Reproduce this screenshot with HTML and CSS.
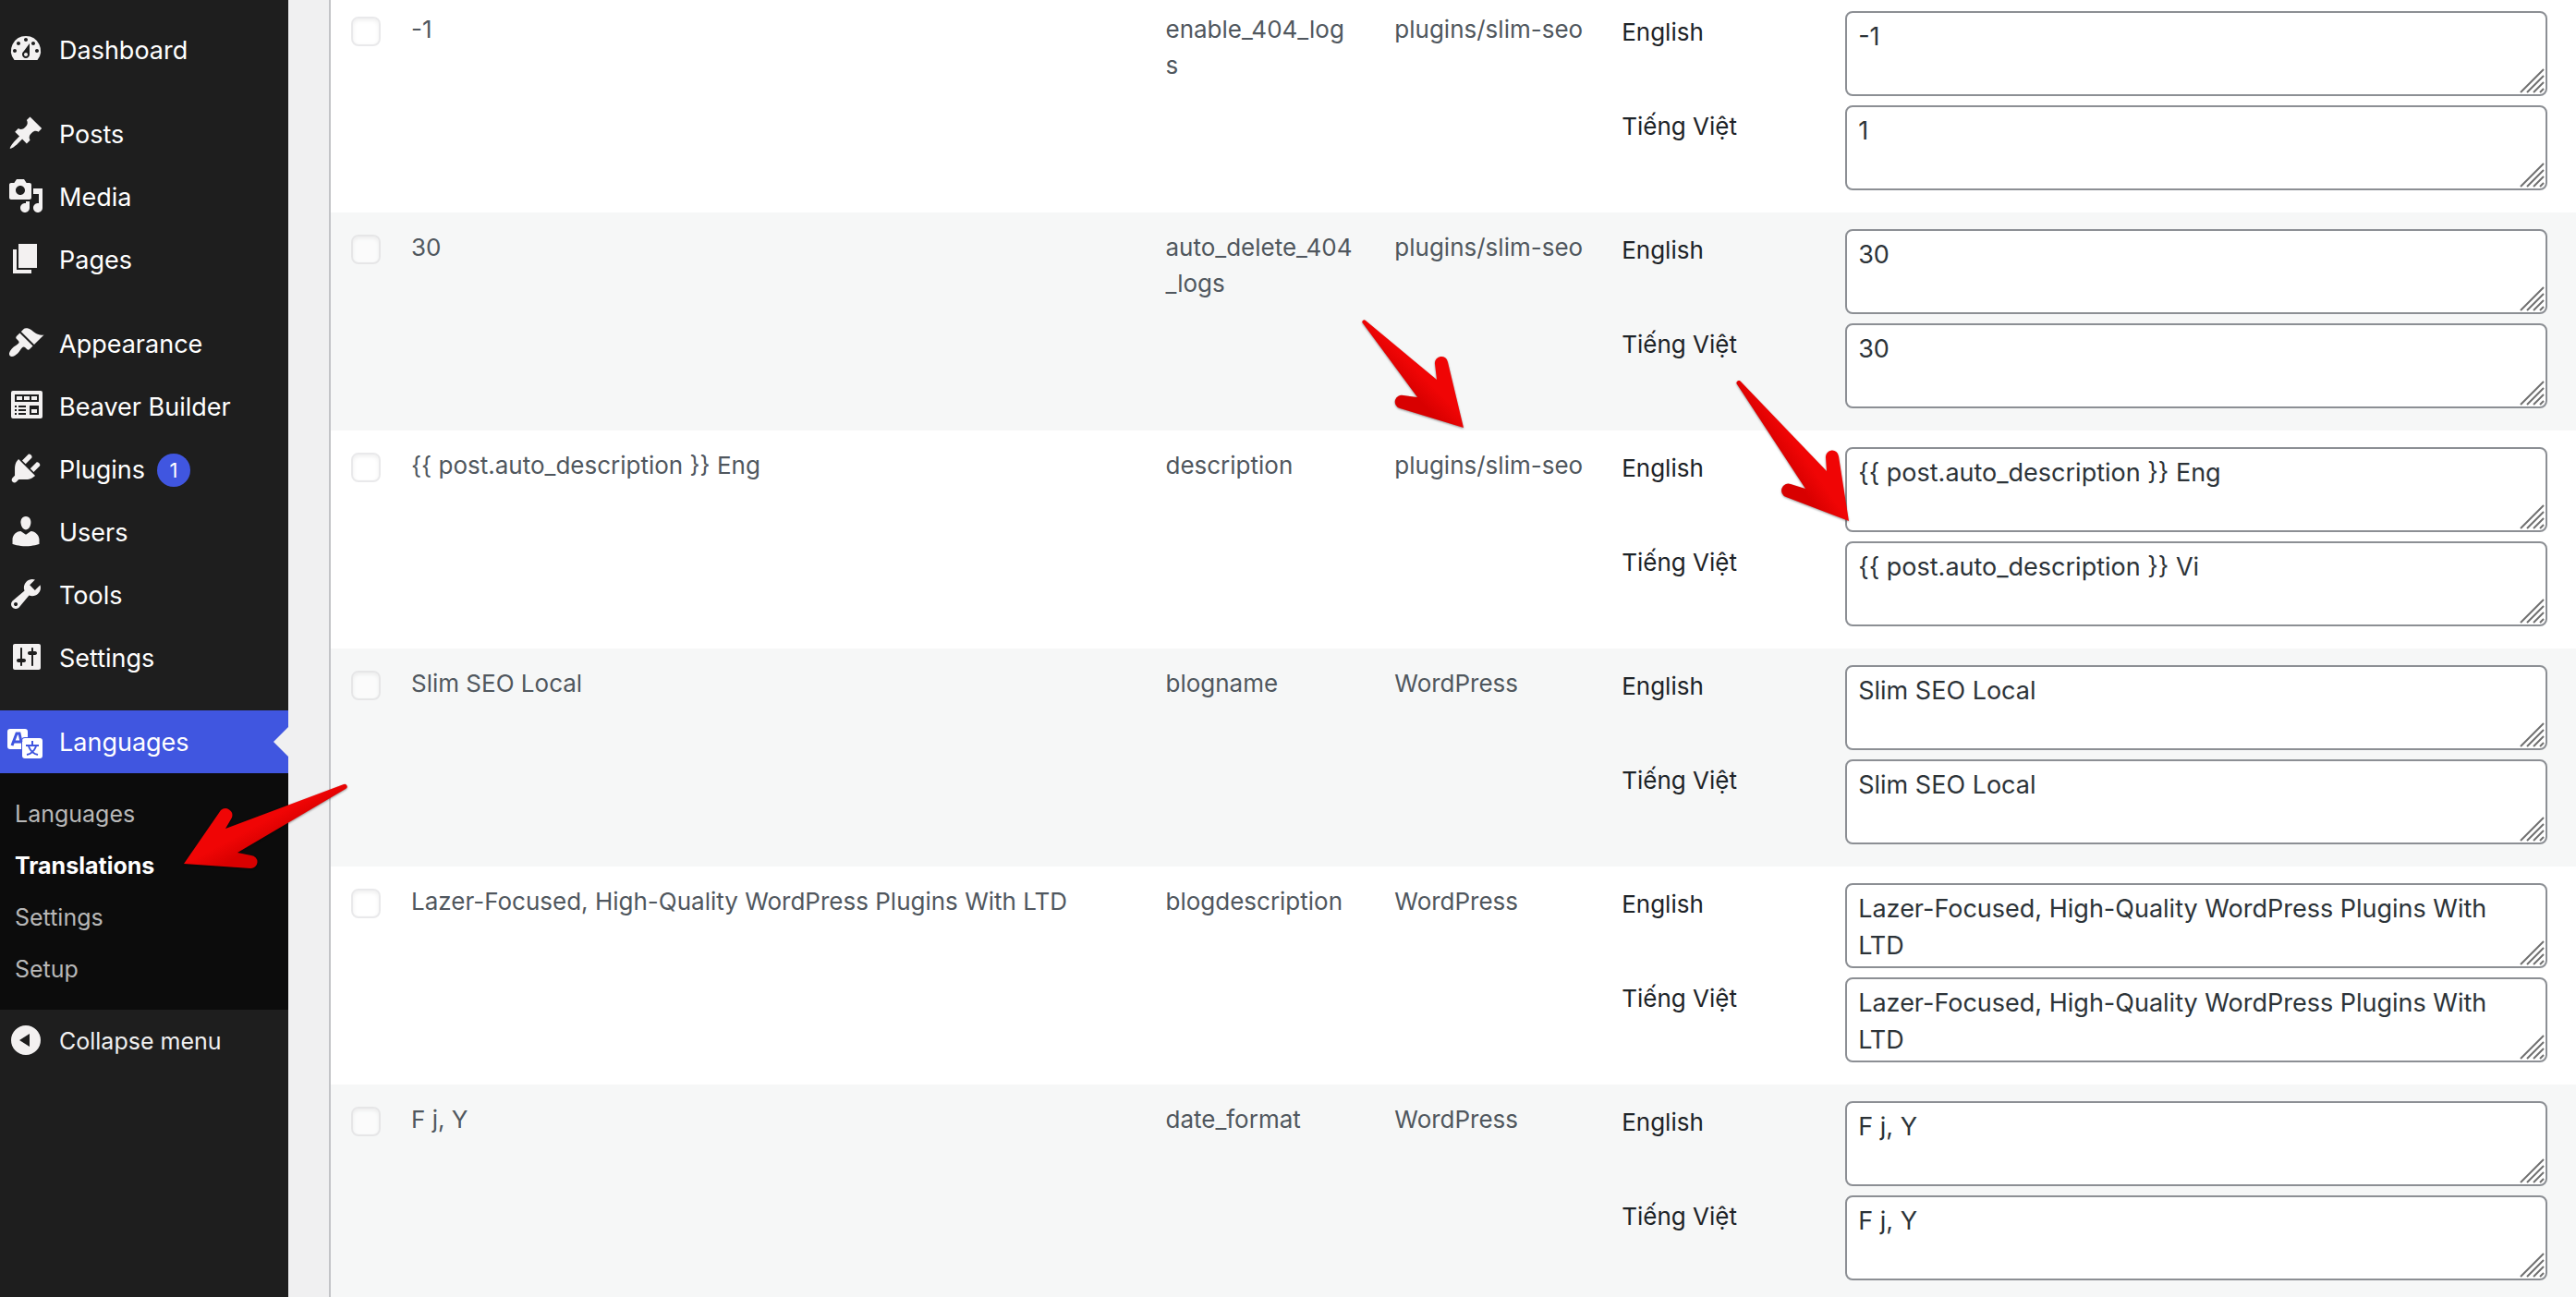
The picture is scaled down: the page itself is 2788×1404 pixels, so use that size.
FILE: index.html
```html
<!DOCTYPE html>
<html lang="en">
<head>
    <meta charset="UTF-8">
    <meta name="viewport" content="width=device-width, initial-scale=1.0">
    <title>Translations</title>
    <link rel="stylesheet" href="styles.css">
</head>
<body>
    <nav class="sidebar">
        <ul class="menu">
            <li>
                <a href="#">
                    <svg class="icon" viewBox="0 0 20 20"><path d="M3.76 16h12.48A7.998 7.998 0 0010 3a7.998 7.998 0 00-6.24 13zM10 4c.55 0 1 .45 1 1s-.45 1-1 1-1-.45-1-1 .45-1 1-1zM6 6c.55 0 1 .45 1 1s-.45 1-1 1-1-.45-1-1 .45-1 1-1zm8 0c.55 0 1 .45 1 1s-.45 1-1 1-1-.45-1-1 .45-1 1-1zm-5.37 5.55L12 7v6c0 1.1-.9 2-2 2s-2-.9-2-2c0-.57.24-1.08.63-1.45zM4 10c.55 0 1 .45 1 1s-.45 1-1 1-1-.45-1-1 .45-1 1-1zm12 0c.55 0 1 .45 1 1s-.45 1-1 1-1-.45-1-1 .45-1 1-1zm-6 2c-.55 0-1 .45-1 1s.45 1 1 1 1-.45 1-1-.45-1-1-1z"/></svg>
                    Dashboard
                </a>
            </li>
            <li class="group-start">
                <a href="#">
                    <svg class="icon" viewBox="0 0 20 20"><path d="M10.44 3.02l1.82-1.82 6.36 6.35-1.83 1.82c-1.05-.68-2.48-.57-3.41.36l-.75.75c-.92.93-1.04 2.35-.35 3.41l-1.83 1.82-2.41-2.41-2.8 2.79c-.42.42-3.38 2.71-3.8 2.29s1.86-3.39 2.28-3.81l2.79-2.79L4.1 9.36l1.83-1.82c1.05.69 2.48.57 3.4-.36l.75-.75c.93-.92 1.05-2.35.36-3.41z"/></svg>
                    Posts
                </a>
            </li>
            <li>
                <a href="#">
                    <svg class="icon" viewBox="0 0 20 20"><path d="M13 11V4c0-.55-.45-1-1-1h-1.67L9 1H5L3.67 3H2c-.55 0-1 .45-1 1v7c0 .55.45 1 1 1h10c.55 0 1-.45 1-1zM7 4.5c1.38 0 2.5 1.12 2.5 2.5S8.38 9.5 7 9.5 4.5 8.38 4.5 7 5.62 4.5 7 4.5zM14 6h5v10.5c0 1.38-1.12 2.5-2.5 2.5S14 17.88 14 16.5s1.12-2.5 2.5-2.5c.17 0 .34.02.5.05V9h-3V6zm-4 8.05V13h2v3.5c0 1.38-1.12 2.5-2.5 2.5S7 17.88 7 16.5 8.12 14 9.5 14c.17 0 .34.02.5.05z"/></svg>
                    Media
                </a>
            </li>
            <li>
                <a href="#">
                    <svg class="icon" viewBox="0 0 20 20"><path d="M6 15V2h10v13H6zm-1 1h8v2H3V5h2v11z"/></svg>
                    Pages
                </a>
            </li>
            <li class="group-start">
                <a href="#">
                    <svg class="icon" viewBox="0 0 20 20"><path d="M14.48 11.06L7.41 3.99l1.5-1.5c.5-.56 2.3-.47 3.51.32 1.21.8 1.43 1.28 2.91 2.1 1.18.64 2.45 1.26 4.45.85zm-.71.71L6.7 4.7 4.93 6.47c-.39.39-.39 1.02 0 1.41l1.06 1.06c.39.39.39 1.03 0 1.42-.6.6-1.43 1.11-2.21 1.69-.35.26-.7.53-1.01.84C1.43 14.23.4 16.08 1.4 17.07c.99 1 2.84-.03 4.18-1.36.31-.31.58-.66.85-1.02.57-.78 1.08-1.61 1.69-2.21.39-.39 1.02-.39 1.41 0l1.06 1.06c.39.39 1.02.39 1.41 0z"/></svg>
                    Appearance
                </a>
            </li>
            <li>
                <a href="#">
                    <svg class="icon" viewBox="0 0 20 20"><path fill-rule="evenodd" d="M3 2h15a1 1 0 011 1v13a1 1 0 01-1 1H3a1 1 0 01-1-1V3a1 1 0 011-1zM4 4v4h13V4zM5 5h3v2H5zM9 5h3v2H9zM13 5h3v2h-3zM4 10h1v1H4zM6 10h4v1H6zM4 12h1v1H4zM6 12h4v1H6zM4 14h1v1H4zM6 14h4v1H6zM12 10h5v5h-5zM13 12v2h3v-2z"/></svg>
                    Beaver Builder
                </a>
            </li>
            <li>
                <a href="#">
                    <svg class="icon" viewBox="0 0 20 20"><path d="M13.11 4.36L9.87 7.6 8 5.73l3.24-3.24c.35-.34 1.05-.2 1.56.32.52.51.66 1.21.31 1.55zm-8 1.77l.91-1.12 9.01 9.01-1.19.84c-.71.71-2.63 1.16-3.82 1.16H6.14L4.9 17.26c-.59.59-1.54.59-2.12 0-.59-.58-.59-1.53 0-2.12l1.24-1.24v-3.88c0-1.13.4-3.19 1.09-3.89zm7.26 3.97l3.24-3.24c.34-.35 1.04-.21 1.55.31.52.51.66 1.21.31 1.55l-3.24 3.25z"/></svg>
                    Plugins <span class="badge">1</span>
                </a>
            </li>
            <li>
                <a href="#">
                    <svg class="icon" viewBox="0 0 20 20"><path d="M10 9.25c-2.27 0-2.73-3.44-2.73-3.44C7 4.02 7.82 2 9.97 2c2.16 0 2.98 2.02 2.71 3.81 0 0-.41 3.44-2.68 3.44zm0 2.57L12.72 10c2.39 0 4.52 2.33 4.52 4.53v2.49s-3.65 1.13-7.24 1.13c-3.65 0-7.24-1.13-7.24-1.13v-2.49c0-2.25 1.94-4.48 4.47-4.48z"/></svg>
                    Users
                </a>
            </li>
            <li>
                <a href="#">
                    <svg class="icon" viewBox="0 0 20 20"><path d="M16.68 9.77c-1.34 1.34-3.3 1.67-4.95.99l-5.41 6.52c-.99.99-2.59.99-3.58 0s-.99-2.59 0-3.57l6.52-5.42c-.68-1.65-.35-3.61.99-4.95 1.28-1.28 3.12-1.62 4.72-1.06l-2.89 2.89 2.82 2.82 2.86-2.87c.53 1.58.18 3.39-1.08 4.65zM3.81 16.21c.4.39 1.04.39 1.43 0 .4-.4.4-1.04 0-1.43-.39-.4-1.03-.4-1.43 0-.39.39-.39 1.03 0 1.43z"/></svg>
                    Tools
                </a>
            </li>
            <li>
                <a href="#">
                    <svg class="icon" viewBox="0 0 20 20"><path d="M18 16V4c0-.55-.45-1-1-1H4c-.55 0-1 .45-1 1v12c0 .55.45 1 1 1h13c.55 0 1-.45 1-1zM8 11h1c.55 0 1 .45 1 1s-.45 1-1 1H8v1.5c0 .28-.22.5-.5.5s-.5-.22-.5-.5V13H6c-.55 0-1-.45-1-1s.45-1 1-1h1V5.5c0-.28.22-.5.5-.5s.5.22.5.5V11zm5-2h-1c-.55 0-1-.45-1-1s.45-1 1-1h1V5.5c0-.28.22-.5.5-.5s.5.22.5.5V7h1c.55 0 1 .45 1 1s-.45 1-1 1h-1v5.5c0 .28-.22.5-.5.5s-.5-.22-.5-.5V9z"/></svg>
                    Settings
                </a>
            </li>
            <li class="group-start">
                <a href="#" class="current">
                    <svg class="icon" viewBox="0 0 40 40">
                        <path d="M3 7h16a3 3 0 013 3v6h-3a4 4 0 00-4 4v9H3a3 3 0 01-3-3V10a3 3 0 013-3z"/>
                        <rect x="16" y="17" width="22" height="22" rx="3"/>
                        <path class="icon-line" d="M5 25l5-13h3l2 9M7 21h8"/>
                        <path class="icon-line thin" d="M27 20v4M20 25h14M23 26c2 5 5 8 10 9M31 26c-2 5-5 8-10 9"/>
                    </svg>
                    Languages
                </a>
                <ul class="submenu">
                    <li><a href="#">Languages</a></li>
                    <li><a href="#" class="active">Translations</a></li>
                    <li><a href="#">Settings</a></li>
                    <li><a href="#">Setup</a></li>
                </ul>
            </li>
        </ul>
        <button type="button" class="collapse">
            <svg class="icon" viewBox="0 0 20 20"><path fill-rule="evenodd" d="M10 2a8 8 0 110 16 8 8 0 010-16zM12 6.500v7L6.500 10z"/></svg>
            Collapse menu
        </button>
    </nav>

    <main class="content">
        <table class="translations">
            <colgroup>
                <col class="col-check">
                <col class="col-string">
                <col class="col-name">
                <col class="col-group">
                <col>
            </colgroup>
            <tbody>
                <tr>
                    <td class="check"><input type="checkbox" aria-label="-1" disabled></td>
                    <td>-1</td>
                    <td class="name">enable_404_logs</td>
                    <td>plugins/slim-seo</td>
                    <td class="fields">
                        <div class="field"><label for="en-1">English</label><textarea id="en-1" rows="2">-1</textarea></div>
                        <div class="field"><label for="vi-1">Tiếng Việt</label><textarea id="vi-1" rows="2">1</textarea></div>
                    </td>
                </tr>
                <tr>
                    <td class="check"><input type="checkbox" aria-label="30" disabled></td>
                    <td>30</td>
                    <td class="name">auto_delete_404_logs</td>
                    <td>plugins/slim-seo</td>
                    <td class="fields">
                        <div class="field"><label for="en-2">English</label><textarea id="en-2" rows="2">30</textarea></div>
                        <div class="field"><label for="vi-2">Tiếng Việt</label><textarea id="vi-2" rows="2">30</textarea></div>
                    </td>
                </tr>
                <tr>
                    <td class="check"><input type="checkbox" aria-label="description" disabled></td>
                    <td>{{ post.auto_description }} Eng</td>
                    <td class="name">description</td>
                    <td>plugins/slim-seo</td>
                    <td class="fields">
                        <div class="field"><label for="en-3">English</label><textarea id="en-3" rows="2">{{ post.auto_description }} Eng</textarea></div>
                        <div class="field"><label for="vi-3">Tiếng Việt</label><textarea id="vi-3" rows="2">{{ post.auto_description }} Vi</textarea></div>
                    </td>
                </tr>
                <tr>
                    <td class="check"><input type="checkbox" aria-label="blogname" disabled></td>
                    <td>Slim SEO Local</td>
                    <td class="name">blogname</td>
                    <td>WordPress</td>
                    <td class="fields">
                        <div class="field"><label for="en-4">English</label><textarea id="en-4" rows="2">Slim SEO Local</textarea></div>
                        <div class="field"><label for="vi-4">Tiếng Việt</label><textarea id="vi-4" rows="2">Slim SEO Local</textarea></div>
                    </td>
                </tr>
                <tr>
                    <td class="check"><input type="checkbox" aria-label="blogdescription" disabled></td>
                    <td>Lazer-Focused, High-Quality WordPress Plugins With LTD</td>
                    <td class="name">blogdescription</td>
                    <td>WordPress</td>
                    <td class="fields">
                        <div class="field"><label for="en-5">English</label><textarea id="en-5" rows="2">Lazer-Focused, High-Quality WordPress Plugins With LTD</textarea></div>
                        <div class="field"><label for="vi-5">Tiếng Việt</label><textarea id="vi-5" rows="2">Lazer-Focused, High-Quality WordPress Plugins With LTD</textarea></div>
                    </td>
                </tr>
                <tr>
                    <td class="check"><input type="checkbox" aria-label="date_format" disabled></td>
                    <td>F j, Y</td>
                    <td class="name">date_format</td>
                    <td>WordPress</td>
                    <td class="fields">
                        <div class="field"><label for="en-6">English</label><textarea id="en-6" rows="2">F j, Y</textarea></div>
                        <div class="field"><label for="vi-6">Tiếng Việt</label><textarea id="vi-6" rows="2">F j, Y</textarea></div>
                    </td>
                </tr>
            </tbody>
        </table>
    </main>

    <!-- red pointer arrows -->
    <svg class="arrow arrow-menu" viewBox="0 0 178 94">
        <defs>
            <linearGradient id="red-menu" gradientUnits="userSpaceOnUse" x1="70" y1="40" x2="84" y2="66">
                <stop offset="0.3" stop-color="#f00505"/>
                <stop offset="1" stop-color="#d80000"/>
            </linearGradient>
        </defs>
        <path fill="url(#red-menu)" d="M0 87L40 29A7.500 7.500 0 0152 37L45 49L173 1A2.500 2.500 0 01175 6L58 75L73 78A7 7 0 0172 92Z"/>
    </svg>
    <svg class="arrow arrow-group" viewBox="0 0 112 118">
        <defs>
            <linearGradient id="red-group" gradientUnits="userSpaceOnUse" x1="76" y1="58" x2="54" y2="80">
                <stop offset="0.3" stop-color="#f00505"/>
                <stop offset="1" stop-color="#d80000"/>
            </linearGradient>
        </defs>
        <path fill="url(#red-group)" d="M110 117L93 46A7 7 0 0079 48L81 65L4 1A2 2 0 001 4L60 84L45 82A7 7 0 0041 96Z"/>
    </svg>
    <svg class="arrow arrow-field" viewBox="0 0 124 154">
        <defs>
            <linearGradient id="red-field" gradientUnits="userSpaceOnUse" x1="88" y1="86" x2="62" y2="104">
                <stop offset="0.3" stop-color="#f00505"/>
                <stop offset="1" stop-color="#d80000"/>
            </linearGradient>
        </defs>
        <path fill="url(#red-field)" d="M122 152L111 82A7 7 0 0097 83L98 98L5 1A2 2 0 001 4L75 117L59 112A7 7 0 0054 126Z"/>
    </svg>
</body>
</html>
```
FILE: styles.css
```css
* {
    box-sizing: border-box;
}

body {
    display: flex;
    position: relative;
    height: 100vh;
    margin: 0;
    overflow: hidden;
    background: #f0f0f1;
    color: #50575e;
    font: 26px/39px Inter, "Liberation Sans", sans-serif;
}

ul {
    margin: 0;
    padding: 0;
    list-style: none;
}

/* sidebar */
.sidebar {
    flex: 0 0 312px;
    padding-top: 20px;
    background: #1e1e1e;
}

.menu a,
.collapse {
    display: flex;
    position: relative;
    height: 68px;
    color: #fff;
    font-size: 27px;
    line-height: 70px;
    text-decoration: none;
    white-space: nowrap;
}

.group-start {
    margin-top: 23px;
}

.icon {
    flex: none;
    width: 40px;
    height: 40px;
    margin: 13px 16px 0 8px;
    fill: #f3f1f1;
}

.icon-line {
    fill: none;
    stroke: #4056e0;
    stroke-width: 3;
}

.thin {
    stroke-width: 2;
}

.menu .current {
    background: #4056e0;
}

.current .icon {
    fill: #fff;
}

.current::after {
    content: "";
    position: absolute;
    top: 18px;
    right: 0;
    border: 16px solid transparent;
    border-left: 0;
    border-right-color: #f0f0f1;
}

.badge {
    width: 36px;
    height: 36px;
    margin: 17px 0 0 13px;
    border-radius: 50%;
    background: #4056e0;
    font-size: 22px;
    line-height: 36px;
    text-align: center;
}

.submenu {
    padding: 16px 0;
    background: #0c0c0c;
}

.submenu a {
    height: 56px;
    padding-left: 16px;
    color: #b8b8b8;
    font-size: 25px;
    line-height: 56px;
}

.submenu .active {
    color: #fff;
    font-weight: 700;
}

.collapse {
    width: 100%;
    padding: 0;
    border: 0;
    background: none;
    color: #f0f0f1;
    font-family: inherit;
    font-size: 25px;
    line-height: 68px;
}

/* strings table */
.content {
    flex: 1;
    min-width: 0;
    margin-left: 44px;
    border-left: 2px solid #c3c4c7;
    background: #fff;
}

.translations {
    width: 100%;
    margin-top: -6px;
    border-collapse: collapse;
    table-layout: fixed;
}

.translations tr:nth-child(even) {
    background: #f6f7f7;
}

.translations td {
    padding: 18px 20px;
    vertical-align: top;
    overflow-wrap: anywhere;
}

.col-check {
    width: 67px;
}

.col-string {
    width: 33.6%;
}

.col-name,
.col-group {
    width: 10.2%;
}

.translations .check {
    padding: 24px 0 0 22px;
}

.translations .name {
    padding-right: 22px;
}

.check input {
    display: block;
    appearance: none;
    width: 32px;
    height: 32px;
    margin: 0;
    border: 2px solid #dcdcde;
    border-radius: 8px;
    background: #fff;
    box-shadow: inset 0 2px 4px rgba(0, 0, 0, 0.1);
    opacity: 0.6;
}

.translations .fields {
    padding: 18px 31px 24px 18px;
}

.field {
    display: flex;
}

.field + .field {
    margin-top: 10px;
}

.field label {
    flex: 0 0 242px;
    padding-top: 3px;
    color: #1d2327;
}

.field textarea {
    flex: 1;
    min-width: 0;
    height: 92px;
    padding: 6px 12px 2px;
    border: 2px solid #8c8f94;
    border-radius: 8px;
    background: #fff url("data:image/svg+xml,%3Csvg xmlns='http://www.w3.org/2000/svg' width='28' height='28'%3E%3Cpath d='M1 26L26 1M8 26L26 8M15 26L26 15M22 26L26 22' stroke='%23707070' stroke-width='2'/%3E%3C/svg%3E") no-repeat right bottom;
    color: #2c3338;
    font: 27px/40px Inter, "Liberation Sans", sans-serif;
    resize: none;
}

/* arrows lie over the page */
.arrow {
    position: absolute;
    filter: drop-shadow(0 1px 1px rgba(0, 0, 0, 0.4));
}

.arrow-menu {
    left: 199px;
    top: 848px;
    width: 178px;
    height: 94px;
}

.arrow-group {
    left: 1474px;
    top: 346px;
    width: 112px;
    height: 118px;
}

.arrow-field {
    left: 1879px;
    top: 412px;
    width: 124px;
    height: 154px;
}
```
